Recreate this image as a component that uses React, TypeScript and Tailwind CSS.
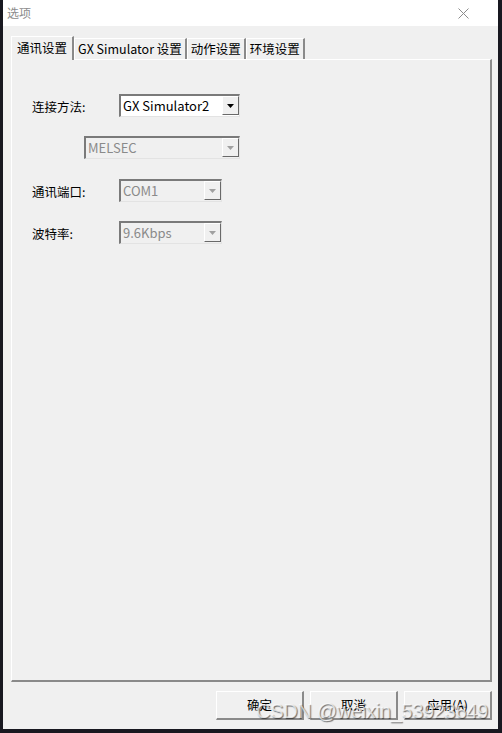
import { ReactNode } from 'react';

const FONT = "font-['Noto_Sans_CJK_SC','Noto_Sans',sans-serif]";

function Arrow({ disabled }: { disabled?: boolean }) {
  return (
    <svg width="7" height="4" viewBox="0 0 7 4">
      <path d="M0 0h7L3.5 4z" fill={disabled ? '#a0a0a0' : '#000'} />
    </svg>
  );
}

function Combo({ value, width, disabled }: { value: string; width: string; disabled?: boolean }) {
  return (
    <div
      className={`${width} h-[23px] flex border-t-2 border-l-2 border-r border-b border-t-[#7a7a7a] border-l-[#7a7a7a] border-r-[#e3e3e3] border-b-[#e3e3e3] ${
        disabled ? 'bg-[#f0f0f0]' : 'bg-white'
      }`}
    >
      <div className={`flex-1 pl-[2px] text-[13px] leading-[19px] ${disabled ? 'text-[#8a8a8a]' : 'text-black'}`}>
        {value}
      </div>
      <div className="w-[17px] h-[19px] flex items-center justify-center bg-[#f0f0f0] border-t border-l border-t-white border-l-white border-r border-b border-r-[#696969] border-b-[#696969]">
        <Arrow disabled={disabled} />
      </div>
    </div>
  );
}

function Tab({ children, active }: { children: ReactNode; active?: boolean }) {
  return (
    <div
      className={`relative flex items-center bg-[#f0f0f0] border-l border-t border-l-white border-t-white border-r-2 border-r-[#8a8a8a] text-[12.5px] text-black ${
        active ? 'h-[24px] -mb-[1px] z-10 px-[5px]' : 'h-[21px] px-[3px]'
      }`}
    >
      {children}
    </div>
  );
}

function Row({ label, children, className }: { label?: string; children: ReactNode; className: string }) {
  return (
    <div className={`flex items-center ${className}`}>
      {label !== undefined && <div className="w-[87px] pt-[4px] text-[12.5px] text-black">{label}</div>}
      {children}
    </div>
  );
}

function Button({ children }: { children: ReactNode }) {
  return (
    <div className="w-[88px] h-[29px] flex items-center justify-center bg-[#f0f0f0] border-t border-l border-t-white border-l-white border-r-2 border-b-2 border-r-[#8a8a8a] border-b-[#8a8a8a] text-[12.5px] text-black">
      {children}
    </div>
  );
}

export default function App() {
  return (
    <div className={`relative w-[502px] h-[733px] bg-[#181820] overflow-hidden ${FONT}`}>
      <div className="ml-[3px] w-[495px] h-[729px] flex flex-col bg-[#f0f0f0]">
        <div className="h-[26px] bg-white flex items-center justify-between pl-[4px] pr-[29px]">
          <span className="text-[12px] text-[#8c8c8c]">选项</span>
          <svg width="11" height="11" viewBox="0 0 11 11">
            <path d="M0.5 0.5l10 10M10.5 0.5l-10 10" stroke="#8c8c8c" strokeWidth="1" />
          </svg>
        </div>

        <div className="flex-1 flex flex-col pt-[10px] pl-[8px] pr-[6px]">
          <div className="flex items-end h-[23px]">
            <Tab active>通讯设置</Tab>
            <Tab>GX Simulator 设置</Tab>
            <Tab>动作设置</Tab>
            <Tab>环境设置</Tab>
          </div>
          <div className="h-[623px] bg-[#f0f0f0] border-l border-t border-l-white border-t-white border-r-2 border-b-2 border-r-[#8a8a8a] border-b-[#8a8a8a] pl-[20px]">
            <Row label="连接方法:" className="mt-[34px]">
              <Combo value="GX Simulator2" width="w-[121px]" />
            </Row>
            <Row className="mt-[19px] pl-[52px]">
              <Combo value="MELSEC" width="w-[156px]" disabled />
            </Row>
            <Row label="通讯端口:" className="mt-[20px]">
              <Combo value="COM1" width="w-[103px]" disabled />
            </Row>
            <Row label="波特率:" className="mt-[19px]">
              <Combo value="9.6Kbps" width="w-[103px]" disabled />
            </Row>
          </div>
          <div className="flex justify-end gap-[6px] mt-[9px]">
            <Button>确定</Button>
            <Button>取消</Button>
            <Button>应用(A)</Button>
          </div>
        </div>
      </div>

      <div className="absolute left-[256px] top-[699px] whitespace-nowrap text-[20px] leading-[24px] tracking-[-0.3px] font-['Liberation_Sans',sans-serif] text-white/70 [text-shadow:1px_1px_1px_rgba(0,0,0,0.55)] pointer-events-none">
        CSDN @weixin_53923649
      </div>
    </div>
  );
}
